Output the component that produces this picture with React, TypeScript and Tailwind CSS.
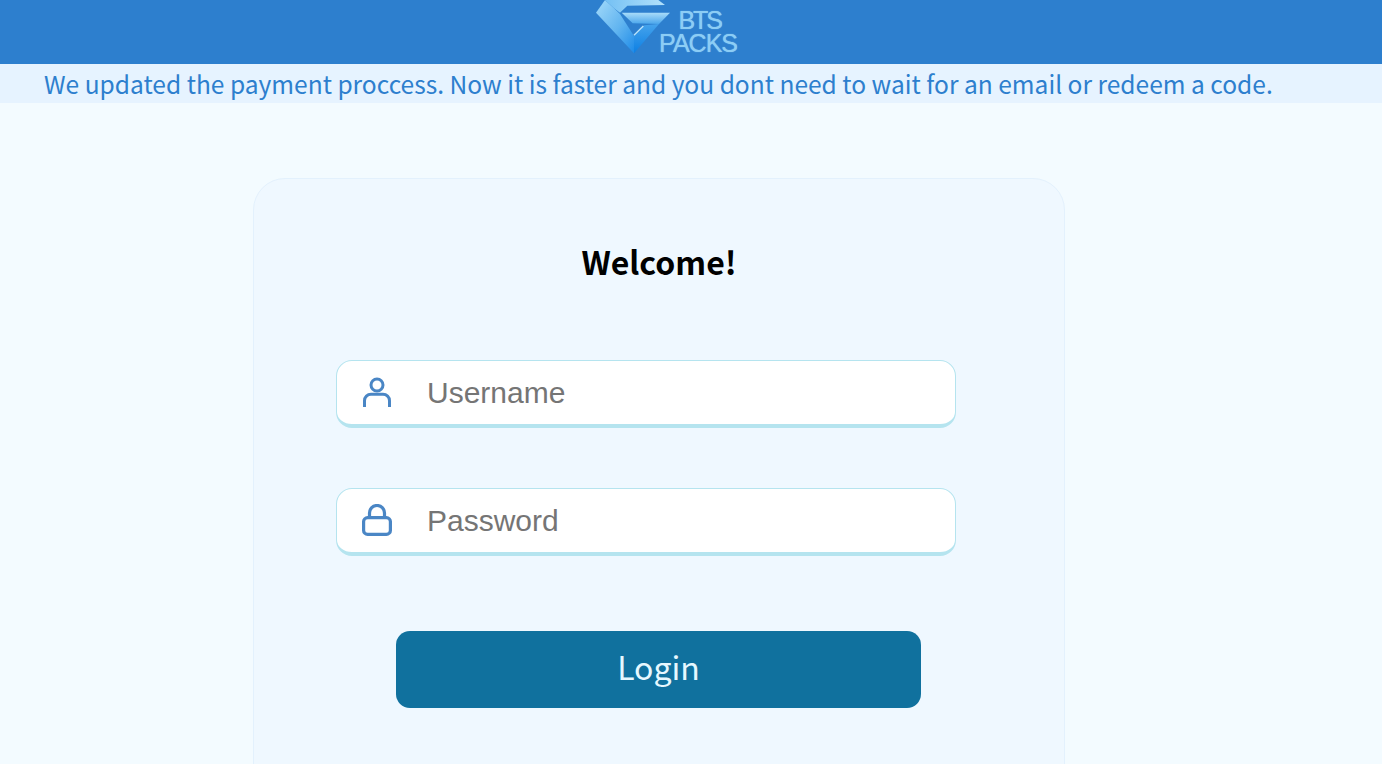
import React from "react";

const cjk = "font-['Noto_Sans_CJK_JP','Noto_Sans',sans-serif]";

// coordinates are 3x page pixels, the top of the gem is cut off by the header
const Logo = () => (
  <svg width="90" height="60" viewBox="0 0 270 180" className="block shrink-0">
    <defs>
      <linearGradient id="gemLeft" x1="0" y1="0" x2="1" y2="1">
        <stop offset="0" stopColor="#a3dafa" />
        <stop offset="0.55" stopColor="#62b5f0" />
        <stop offset="1" stopColor="#1c8ae8" />
      </linearGradient>
      <linearGradient id="gemTop" x1="0" y1="0" x2="1" y2="0">
        <stop offset="0" stopColor="#74c0f3" />
        <stop offset="1" stopColor="#b2e1fb" />
      </linearGradient>
      <linearGradient id="gemBar" x1="0" y1="0" x2="0" y2="1">
        <stop offset="0" stopColor="#a9dcf9" />
        <stop offset="1" stopColor="#4aa6ec" />
      </linearGradient>
      <linearGradient id="gemLow" x1="0" y1="0" x2="0" y2="1">
        <stop offset="0" stopColor="#45a3ec" />
        <stop offset="1" stopColor="#0c7fe3" />
      </linearGradient>
    </defs>
    <path d="M45 0 L18 38 L132 160 L132 108 L90 42 L72 25 Z" fill="url(#gemLeft)" />
    <path d="M45 0 L205 0 L225 15 L112 17 L90 38 L72 25 Z" fill="url(#gemTop)" />
    <path d="M95 38 L240 38 L207 72 L128 70 Z" fill="url(#gemBar)" />
    <path d="M132 108 L162 76 L207 72 L132 160 Z" fill="url(#gemLow)" />
    <path d="M132 106 L160 78" stroke="#b9e4fb" strokeWidth="4" />
  </svg>
);

const UserIcon = () => (
  <svg width="28" height="30" viewBox="0 0 28 30" fill="none" stroke="#4a86c5" strokeWidth="3" className="shrink-0">
    <circle cx="14" cy="8" r="6" />
    <path d="M1.5 30V23.7a6.5 6.5 0 0 1 6.5-6.5h12a6.5 6.5 0 0 1 6.5 6.5V30" />
  </svg>
);

const LockIcon = () => (
  <svg width="30" height="32" viewBox="0 0 30 32" fill="none" stroke="#4a86c5" strokeWidth="3.2" className="shrink-0">
    <rect x="1.6" y="13.6" width="26.8" height="16.8" rx="4" />
    <path d="M7.5 14V9a7.5 7.5 0 0 1 15 0V14" />
  </svg>
);

const Field = ({ icon, label }: { icon: React.ReactNode; label: string }) => (
  <div className="flex h-[68px] w-[620px] items-center rounded-[16px] border border-b-[4px] border-[#b5e4ef] bg-white">
    <div className="mr-[10px] flex w-[80px] justify-center pb-[2px]">{icon}</div>
    <span className="font-['Liberation_Sans',sans-serif] text-[30px] leading-none text-[#757575]">{label}</span>
  </div>
);

export default function App() {
  return (
    <div className="h-[764px] overflow-hidden bg-[#f3fbff]">
      <header className="flex h-[64px] items-start overflow-hidden bg-[#2d7fce] pl-[590px]">
        <Logo />
        <div className="ml-[-21px] flex w-[78px] flex-col items-end pt-[9px] font-['Liberation_Sans',sans-serif] text-[25px] leading-[23px] tracking-[-1px] text-[#8ccdf5] [text-shadow:0_0_1px_#8ccdf5]">
          <span className="mr-[16px] tracking-[-2px]">BTS</span>
          <span>PACKS</span>
        </div>
      </header>
      <div className={`h-[39px] bg-[#e6f3ff] pl-[44px] text-[24.55px] leading-[39px] whitespace-nowrap text-[#2d7fce] ${cjk}`}>
        We updated the payment proccess. Now it is faster and you dont need to wait for an email or redeem a code.
      </div>
      <main className="pt-[75px] pl-[253px]">
        <div className={`h-[700px] w-[812px] rounded-[32px] border border-[#e3f1fd] bg-[#eff8ff] pl-[82px] ${cjk}`}>
          <h1 className="mt-[58px] w-[646px] text-center text-[32px] leading-[48px] font-bold text-black">Welcome!</h1>
          <div className="mt-[75px] flex flex-col gap-[60px]">
            <Field icon={<UserIcon />} label="Username" />
            <Field icon={<LockIcon />} label="Password" />
          </div>
          <button className="mt-[75px] ml-[60px] block h-[77px] w-[525px] rounded-[14px] bg-[#10719e] pb-[8px] text-[32px] text-[#e6f8ff]">
            Login
          </button>
        </div>
      </main>
    </div>
  );
}
